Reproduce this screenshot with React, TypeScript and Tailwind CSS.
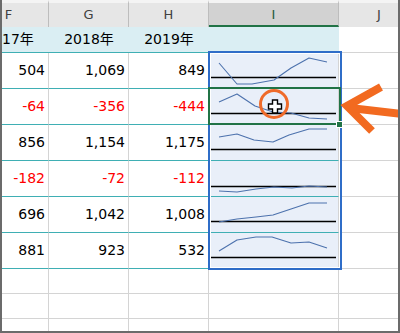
import React from "react";

type Pt = [number, number];

const rows: { f: number; g: number; h: number; axis: number; pts: Pt[] }[] = [
  { f: 504, g: 1069, h: 849, axis: 24, pts: [[10, 10], [28, 31], [43, 31], [65, 27], [82, 15], [100, 5], [118, 9]] },
  { f: -64, g: -356, h: -444, axis: 24, pts: [[10, 13], [28, 5], [46, 17], [64, 23], [82, 24], [100, 29], [118, 30]] },
  { f: 856, g: 1154, h: 1175, axis: 24, pts: [[10, 12], [28, 9], [45, 15], [64, 17], [80, 10], [100, 4], [118, 4]] },
  { f: -182, g: -72, h: -112, axis: 25, pts: [[10, 30], [28, 31], [47, 28], [65, 26], [83, 27], [100, 25], [118, 26]] },
  { f: 696, g: 1042, h: 1008, axis: 24, pts: [[10, 25], [28, 22], [47, 20], [64, 18], [82, 12], [100, 6], [118, 6]] },
  { f: 881, g: 923, h: 532, axis: 24, pts: [[10, 18], [28, 7], [47, 4], [63, 4], [82, 10], [100, 9], [118, 15]] },
];

function Num({ v }: { v: number }) {
  return (
    <div className="flex items-center justify-end border-r border-b border-r-[#d4d4d4] border-b-[#3fafb4] bg-white pr-[3px]">
      <span className={v < 0 ? "text-[#ff0000]" : "text-black"}>{v.toLocaleString("en-US")}</span>
    </div>
  );
}

function Spark({ axis, pts }: { axis: number; pts: Pt[] }) {
  return (
    <div className="border-r border-b border-r-[#d4d4d4] border-b-[#3fafb4] bg-[#e9eff9]">
      <svg width="129" height="35" className="block">
        <line x1="2" y1={axis + 0.5} x2="127" y2={axis + 0.5} stroke="#000" strokeWidth="1.3" />
        <polyline
          points={pts.map((p) => p.join(",")).join(" ")}
          fill="none"
          stroke="#4d72ad"
          strokeWidth="1.1"
          strokeLinejoin="round"
        />
      </svg>
    </div>
  );
}

const emptyCell = "border-r border-b border-[#d4d4d4] bg-white";

export default function App() {
  return (
    <div className="relative h-[333px] w-[400px] overflow-hidden bg-white font-['DejaVu_Sans','Noto_Sans_CJK_JP',sans-serif] text-[14px]">
      <div className="ml-[-31px] grid grid-cols-[80px_80px_80px_130px_80px] grid-rows-[27px_26px_repeat(6,36px)_25px_25px_25px]">
        {/* column letters */}
        {["F", "G", "H"].map((c) => (
          <div
            key={c}
            className="flex items-center justify-center border-t-[3px] border-r border-t-[#f4f4f4] border-r-[#bdbdbd] bg-[#e6e6e6] text-[13px] text-[#404040]"
          >
            {c}
          </div>
        ))}
        <div className="flex items-center justify-center border-t-[3px] border-r border-b-2 border-t-[#f4f4f4] border-r-[#bdbdbd] border-b-[#217346] bg-[#d2d2d2] pt-[2px] text-[13px] text-[#1e5c3a]">
          I
        </div>
        <div className="flex items-center justify-center border-t-[3px] border-t-[#f4f4f4] bg-[#e6e6e6] text-[13px] text-[#404040]">
          J
        </div>

        {/* year row */}
        {["2017年", "2018年", "2019年", ""].map((y, i) => (
          <div key={i} className="flex items-center justify-center border-b border-[#3fafb4] bg-[#daeef3] text-[14px] text-black">
            {y}
          </div>
        ))}
        <div className={emptyCell} />

        {rows.map((r, i) => (
          <React.Fragment key={i}>
            <Num v={r.f} />
            <Num v={r.g} />
            <Num v={r.h} />
            <Spark axis={r.axis} pts={r.pts} />
            <div className={emptyCell} />
          </React.Fragment>
        ))}

        {Array.from({ length: 15 }).map((_, i) => (
          <div key={"e" + i} className={emptyCell} />
        ))}
      </div>

      {/* selection of the sparkline range */}
      <div className="pointer-events-none absolute left-[208px] top-[51px] h-[219px] w-[134px] border-2 border-[#2f6dc8] shadow-[inset_0_0_0_1px_white]" />
      {/* active cell */}
      <div className="pointer-events-none absolute left-[208px] top-[87px] h-[38px] w-[133px] border-2 border-[#217346]" />
      <div className="pointer-events-none absolute left-[336px] top-[121px] h-[7px] w-[7px] border border-white bg-[#217346]" />

      {/* annotation */}
      <svg className="pointer-events-none absolute left-0 top-0" width="400" height="333">
        <circle cx="274" cy="104" r="13.5" fill="none" stroke="#ef6b2a" strokeWidth="3" />
        <path
          d="M272.5 100 h5 v4 h4 v5 h-4 v4 h-5 v-4 h-4 v-5 h4 z"
          fill="#fff"
          stroke="#000"
          strokeWidth="1.4"
          strokeLinejoin="miter"
        />
        <path d="M381 87 L347 106 L372 131" fill="none" stroke="#f26a20" strokeWidth="8" strokeLinejoin="miter" />
        <path d="M350 108 L402 114" fill="none" stroke="#f26a20" strokeWidth="8" />
      </svg>

      {/* window frame */}
      <div className="pointer-events-none absolute inset-0 border-r-2 border-b-2 border-l-2 border-[#6b6b6b]" />
    </div>
  );
}
